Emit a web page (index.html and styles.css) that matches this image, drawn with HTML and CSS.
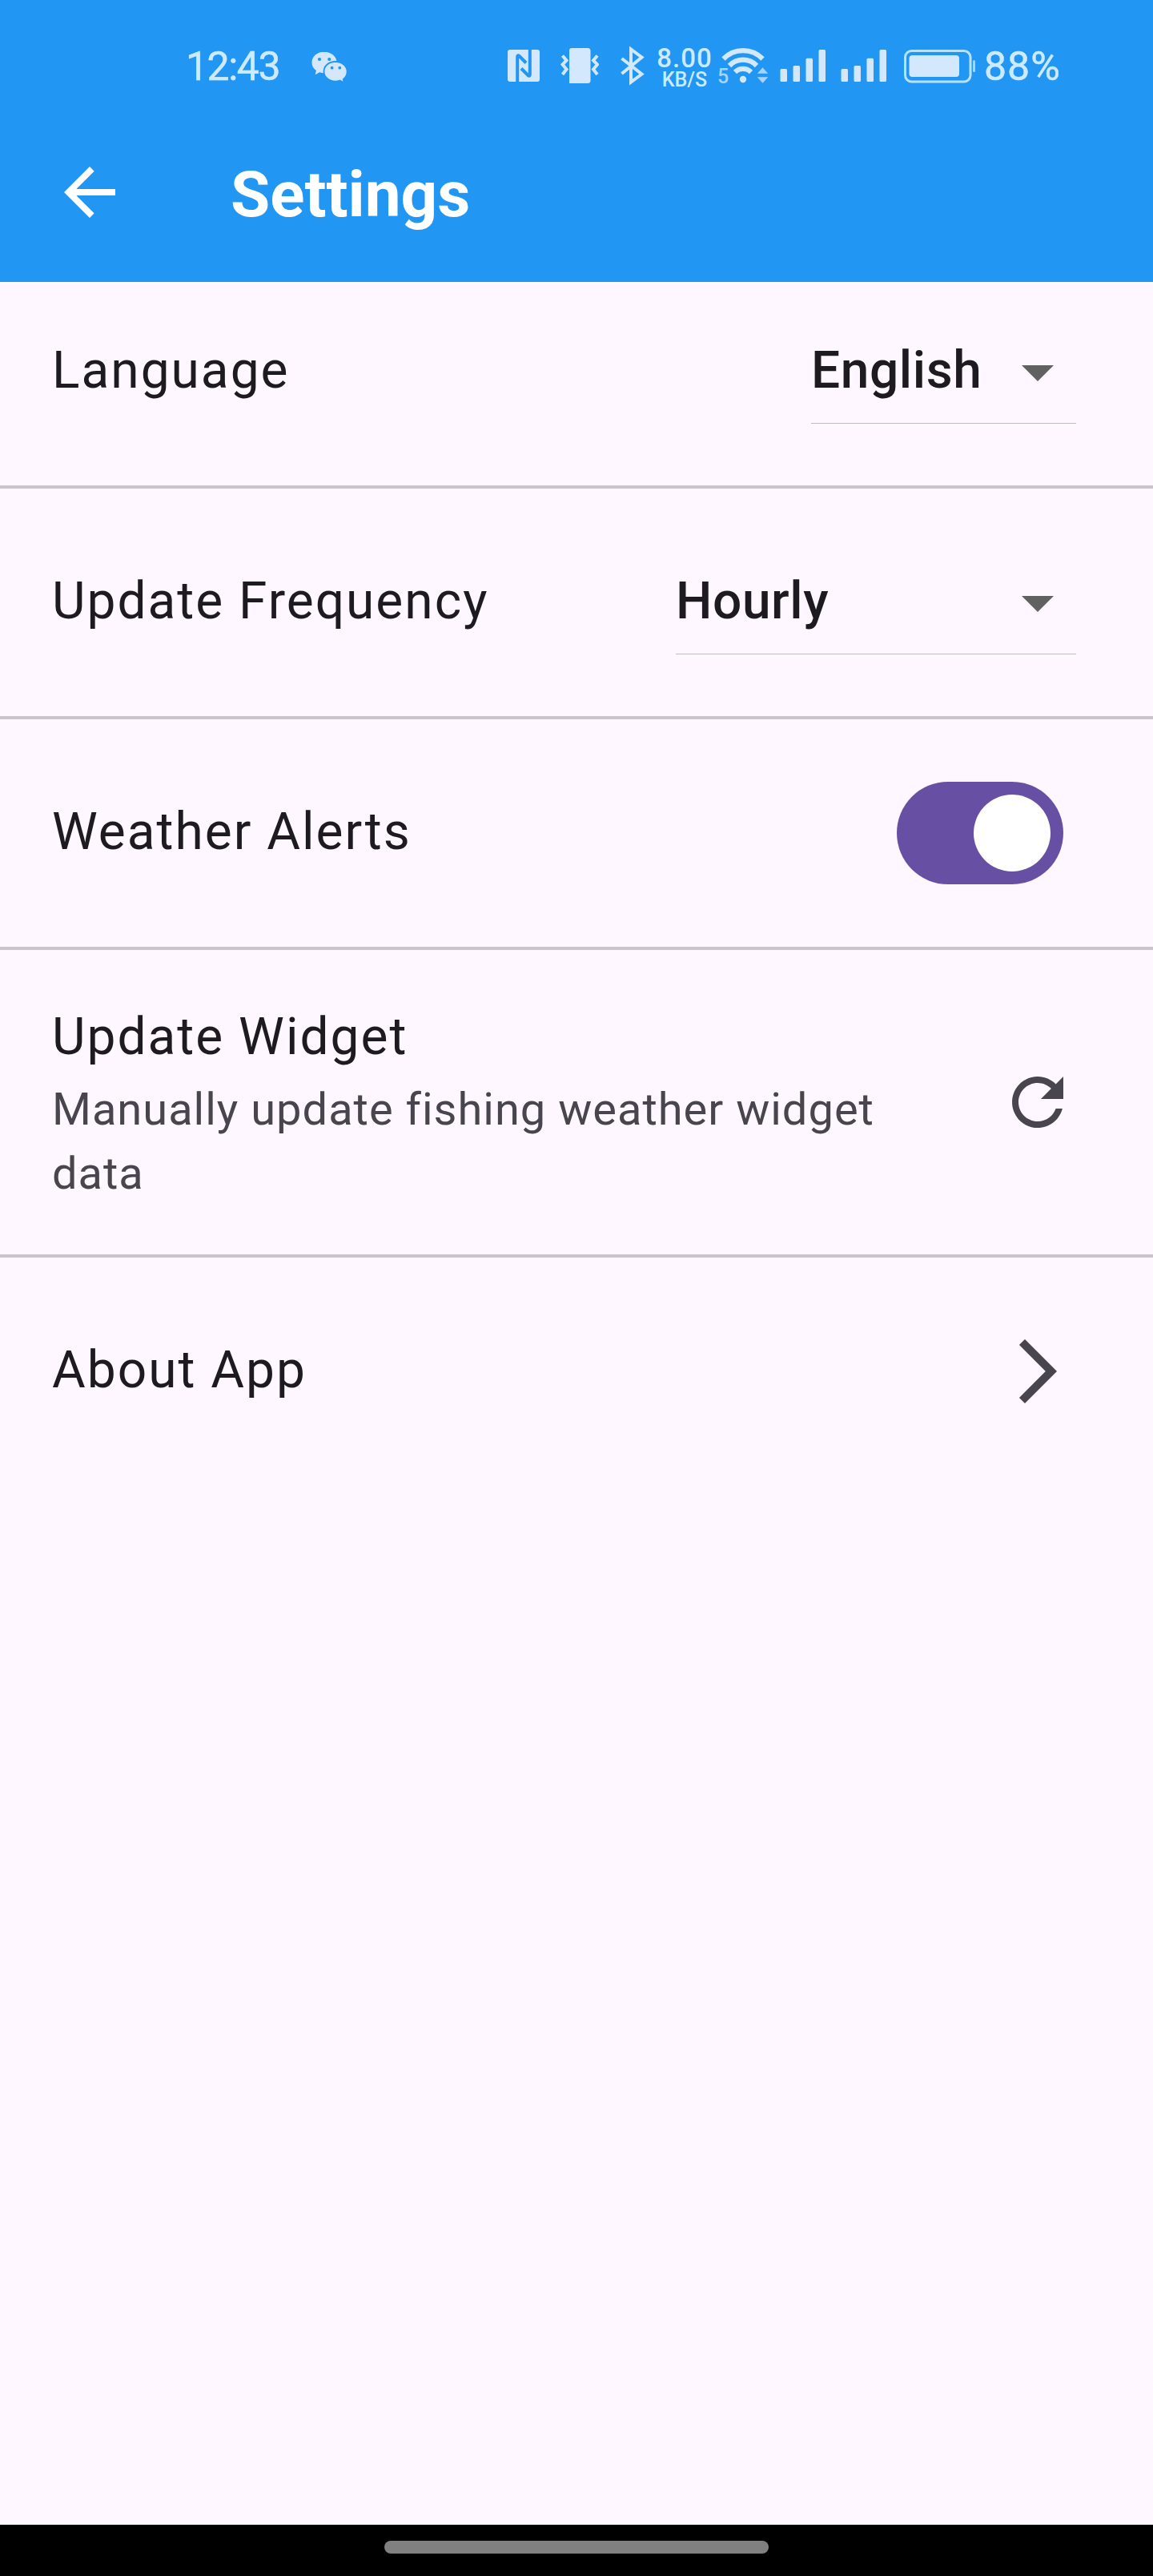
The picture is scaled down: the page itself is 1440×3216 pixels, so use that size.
FILE: index.html
```
<!DOCTYPE html>
<html lang="en">
<head>
<meta charset="utf-8">
<title>Settings</title>
<link rel="stylesheet" href="styles.css">
</head>
<body>
<div class="screen">
  <header class="header">
    <div class="status">
      <span class="time">12:43</span>
      <svg class="ic wechat" width="46" height="52" viewBox="388 56 46 52"><path d="M404.500 64.700c-8.400 0-15 5.700-15 13.200 0 4.200 2 7.600 5.400 10l-1.200 5.300 5.300-2.900c6 1.600 10 .9 14-1.200 5-2.600 7.600-6 7.600-11.200 0-7.500-7-13.200-16.100-13.200z"/><path class="cut" d="M418.800 77c-8 0-14.300 5.300-14.300 12.200s6.300 12.400 14.300 12.400c2 0 4-.4 5.700-1l5.300 3-1-4.600c3-2.300 4.800-5.700 4.800-9.800 0-6.900-6.600-12.200-14.800-12.200z"/><circle class="hole" cx="399" cy="74" r="2.100"/><circle class="hole" cx="411.300" cy="74" r="2.100"/><circle class="hole" cx="414.600" cy="84.700" r="1.900"/><circle class="hole" cx="424.300" cy="84.700" r="1.900"/></svg>
      <svg class="ic nfc" width="40" height="52" viewBox="634 56 40 52"><rect x="634" y="62" width="40" height="40" rx="3"/><path class="gap" d="M646.200 102V71q0-3 2.400-1l8.400 8.500M661.800 62v31q0 3-2.400 1l-8.400-8.500"/></svg>
      <svg class="ic vibrate" width="48" height="52" viewBox="700 56 48 52"><path d="M714 60h20a3.500 3.500 0 0 1 3.500 3.500v37a3.500 3.500 0 0 1-3.500 3.500H711V63a3 3 0 0 1 3-3z"/><path class="line" d="M702.500 69.500l5 6-5 5 5 6-5 6.500M746 69.500l-5 6 5 5-5 6 5 6.500"/></svg>
      <svg class="ic bt" width="30" height="52" viewBox="775 56 30 52"><path class="line" d="M776.500 73L801.500 92.500 788 102.500V61.500L801.500 71.500 776.500 92"/></svg>
      <span class="speed"><span class="rate">8.00</span><span class="unit">KB/S</span></span>
      <span class="band">5</span>
      <svg class="ic wifi" width="60" height="52" viewBox="900 56 60 52"><path class="arc" d="M903.500 73.500A34 34 0 0 1 952.500 73.500M911 82A23.500 23.500 0 0 1 945 82M918 90A14 14 0 0 1 938 90"/><circle cx="928" cy="99" r="4.200"/><path class="dim" d="M952.500 84.300l6.700 7.400h-13.400zM952.500 103.700l6.700-7.400h-13.400z"/></svg>
      <svg class="ic sig1" width="58" height="52" viewBox="974 56 58 52"><rect x="974.500" y="86" width="8.500" height="16" rx="1.500"/><rect x="990.500" y="82" width="8.500" height="20" rx="1.500"/><rect x="1006.500" y="72.700" width="8.500" height="29.300" rx="1.500"/><rect x="1022.500" y="62" width="8.500" height="40" rx="1.500"/></svg>
      <svg class="ic sig2" width="58" height="52" viewBox="974 56 58 52"><rect x="974.500" y="86" width="8.500" height="16" rx="1.500"/><rect x="990.500" y="82" width="8.500" height="20" rx="1.500"/><rect x="1006.500" y="72.700" width="8.500" height="29.300" rx="1.500"/><rect x="1022.500" y="62" width="8.500" height="40" rx="1.500"/></svg>
      <svg class="ic battery" width="90" height="52" viewBox="1129 56 90 52"><rect class="shell" x="1130.500" y="63.500" width="81.500" height="38.500" rx="8"/><rect x="1135.500" y="69" width="62.500" height="27" rx="4"/><rect class="dim" x="1215" y="75" width="3" height="15" rx="1.500"/></svg>
      <span class="percent">88%</span>
    </div>
    <div class="appbar">
      <svg class="icon" viewBox="0 0 24 24"><path d="M20 11H7.830l5.590-5.590L12 4l-8 8 8 8 1.410-1.410L7.830 13H20v-2z"/></svg>
      <h1 class="title">Settings</h1>
    </div>
  </header>

  <main class="list">
    <section class="row">
      <span class="label">Language</span>
      <div class="select select-language">
        <span class="value">English</span>
        <svg class="icon" viewBox="0 0 24 24"><path d="M7 10l5 5 5-5z"/></svg>
      </div>
    </section>
    <hr class="divider">
    <section class="row">
      <span class="label">Update Frequency</span>
      <div class="select select-frequency">
        <span class="value">Hourly</span>
        <svg class="icon" viewBox="0 0 24 24"><path d="M7 10l5 5 5-5z"/></svg>
      </div>
    </section>
    <hr class="divider">
    <section class="row">
      <span class="label">Weather Alerts</span>
      <div class="switch"><span class="knob"></span></div>
    </section>
    <hr class="divider">
    <section class="row row-tall">
      <div class="texts">
        <span class="label">Update Widget</span>
        <p class="sub">Manually update fishing weather widget data</p>
      </div>
      <svg class="icon" viewBox="0 0 24 24"><path d="M17.650 6.350C16.200 4.900 14.210 4 12 4c-4.420 0-7.990 3.580-7.990 8s3.570 8 7.990 8c3.730 0 6.840-2.550 7.730-6h-2.080c-.82 2.330-3.040 4-5.650 4-3.310 0-6-2.690-6-6s2.690-6 6-6c1.660 0 3.140.69 4.220 1.780L13 11h7V4l-2.350 2.350z"/></svg>
    </section>
    <hr class="divider">
    <section class="row">
      <span class="label">About App</span>
      <svg class="icon" viewBox="0 0 24 24"><path d="M6.230 20.230L8 22l10-10L8 2 6.230 3.770 14.460 12z"/></svg>
    </section>
  </main>

  <footer class="nav"><span class="pill"></span></footer>
</div>
</body>
</html>
```
FILE: styles.css
```
* { box-sizing: border-box; }
body { margin: 0; font-family: Roboto, sans-serif; }
.screen { width: 1440px; height: 3216px; display: flex; flex-direction: column; background: #fef7ff; color: #1d1b20; }

.header { height: 352px; background: #2196f3; color: #fff; }
.status { height: 128px; padding: 56px 0 0 232px; display: flex; align-items: flex-start; color: #cdeaff; }
.ic { flex: none; display: block; fill: #d3e8fd; }
.time, .percent { height: 52px; font-size: 50px; line-height: 55px; white-space: nowrap; flex: none; -webkit-text-stroke: .5px #cdeaff; }
.time { width: 120px; letter-spacing: -1.500px; }
.percent { margin-left: 10px; width: 104px; letter-spacing: 1px; }
.wechat { margin-left: 36px; }
.cut { stroke: #2196f3; stroke-width: 1.800px; }
.hole { fill: #2196f3; }
.nfc { margin-left: 200px; }
.gap { fill: none; stroke: #2196f3; stroke-width: 4px; }
.vibrate { margin-left: 26px; }
.line { fill: none; stroke: #d3e8fd; stroke-width: 4px; }
.bt { margin-left: 27px; }
.speed { margin-left: 14px; width: 72px; height: 60px; display: flex; flex-direction: column; align-items: center; font-weight: 500; white-space: nowrap; }
.rate { font-size: 33px; line-height: 28px; padding-top: 3px; letter-spacing: 1px; }
.unit { font-size: 25px; line-height: 24px; padding-top: 1px; }
.band { margin-left: 5px; width: 4px; font-size: 25px; line-height: 24px; padding-top: 28px; font-weight: 500; opacity: .75; }
.arc { fill: none; stroke: #d3e8fd; stroke-width: 6.200px; }
.dim { opacity: .75; }
.sig1 { margin-left: 14px; }
.sig2 { margin-left: 18px; }
.battery { margin-left: 21px; }
.shell { fill: none; stroke: #b5e2fe; stroke-width: 3px; }

.appbar { height: 224px; padding-left: 64px; display: flex; align-items: center; gap: 128px; }
.icon { width: 96px; height: 96px; flex: none; display: block; fill: #49454f; }
.appbar .icon { fill: #fff; }
.title { margin: 0; padding-top: 6px; font-size: 80px; font-weight: 700; line-height: 102px; }

.list { flex: 1; }
.row { height: 224px; padding: 0 96px 0 65px; display: flex; align-items: center; justify-content: space-between; }
.row-tall { height: 320px; }
.label { display: block; font-size: 64px; line-height: 96px; letter-spacing: 2px; padding-bottom: 3px; white-space: nowrap; }
.texts { width: 1120px; }
.texts .label { height: 96px; line-height: 94px; padding: 0; }
.sub { margin: 0; padding-top: 1px; font-size: 56px; line-height: 80px; letter-spacing: 1px; color: #49454f; }
.divider { margin: 30px 0; height: 4px; border: 0; background: #cac4d0; }
.select { height: 130px; border-bottom: 1px solid #bdbdbd; display: flex; align-items: center; justify-content: space-between; }
.select .icon { fill: #616161; }
.select-language { width: 331px; }
.select-frequency { width: 500px; }
.value { font-size: 64px; font-weight: 500; line-height: 96px; letter-spacing: .6px; padding-bottom: 1px; }
.switch { width: 208px; height: 128px; margin-right: 16px; padding: 16px; border-radius: 64px; background: #6750a4; display: flex; justify-content: flex-end; }
.knob { width: 96px; height: 96px; border-radius: 50%; background: #fff; }

.nav { height: 64px; padding-top: 20px; background: #000; display: flex; justify-content: center; align-items: flex-start; }
.pill { width: 480px; height: 16px; border-radius: 8px; background: #808080; }
```
